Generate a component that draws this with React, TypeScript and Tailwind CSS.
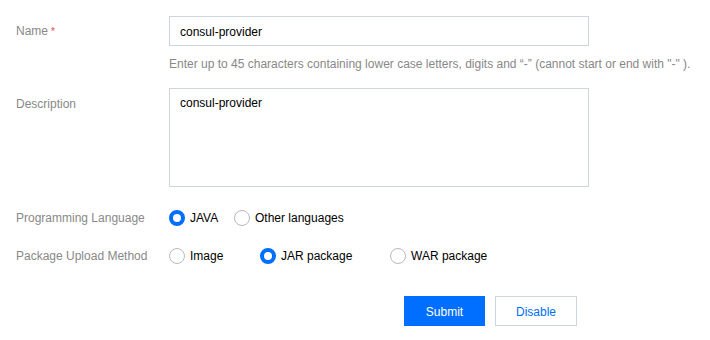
import { useState } from 'react';

type Option = { value: string; label: string; className?: string };

function Radio({ checked, label, onClick, className = '' }: { checked: boolean; label: string; onClick: () => void; className?: string }) {
  return (
    <label onClick={onClick} className={`flex items-center cursor-pointer ${className}`}>
      <span
        className={`w-4 h-4 rounded-full box-border ${
          checked ? 'border-[4px] border-[#006eff] bg-white' : 'border border-[#b5b9bf] bg-white'
        }`}
      />
      <span className="ml-[5px] text-[12px] text-[#000]">{label}</span>
    </label>
  );
}

export default function App() {
  const [lang, setLang] = useState('java');
  const [pkg, setPkg] = useState('jar');

  const langs: Option[] = [
    { value: 'java', label: 'JAVA', className: 'w-[65px]' },
    { value: 'other', label: 'Other languages' },
  ];
  const pkgs: Option[] = [
    { value: 'image', label: 'Image', className: 'w-[91px]' },
    { value: 'jar', label: 'JAR package', className: 'w-[130px]' },
    { value: 'war', label: 'WAR package' },
  ];

  return (
    <div className="w-[710px] h-[340px] bg-white font-['Liberation_Sans',Arial,sans-serif] text-[12px] pt-4">
      {/* Name */}
      <div className="flex">
        <div className="w-[169px] pl-4 h-[30px] flex items-center text-[#888]">
          Name<span className="text-[#e54545] ml-[3px] text-[10px]">*</span>
        </div>
        <div>
          <input
            defaultValue="consul-provider"
            className="w-[420px] h-[30px] border border-[#cfd5de] px-[10px] pt-[1px] text-[12px] text-[#000] outline-none"
          />
          <p className="mt-[11px] text-[#888] leading-[14px]">
            Enter up to 45 characters containing lower case letters, digits and “-” (cannot start or end with "-" ).
          </p>
        </div>
      </div>

      {/* Description */}
      <div className="flex mt-[17px]">
        <div className="w-[169px] pl-4 pt-[7px] text-[#888]">Description</div>
        <textarea
          defaultValue="consul-provider"
          className="w-[420px] h-[99px] border border-[#cfd5de] px-[10px] py-[5px] text-[12px] text-[#000] resize-none outline-none"
        />
      </div>

      {/* Programming Language */}
      <div className="flex items-center mt-[23px] h-4">
        <div className="w-[169px] pl-4 text-[#888]">Programming Language</div>
        <div className="flex items-center">
          {langs.map((o) => (
            <Radio key={o.value} checked={lang === o.value} label={o.label} onClick={() => setLang(o.value)} className={o.className} />
          ))}
        </div>
      </div>

      {/* Package Upload Method */}
      <div className="flex items-center mt-[22px] h-4">
        <div className="w-[169px] pl-4 text-[#888]">Package Upload Method</div>
        <div className="flex items-center">
          {pkgs.map((o) => (
            <Radio key={o.value} checked={pkg === o.value} label={o.label} onClick={() => setPkg(o.value)} className={o.className} />
          ))}
        </div>
      </div>

      {/* Actions */}
      <div className="flex mt-[32px] pl-[404px] gap-[10px]">
        <button className="w-[81px] h-[30px] pt-[1px] bg-[#006eff] text-white text-[12px]">Submit</button>
        <button className="w-[82px] h-[30px] pt-[1px] border border-[#cfd5de] bg-white text-[#006eff] text-[12px]">Disable</button>
      </div>
    </div>
  );
}
